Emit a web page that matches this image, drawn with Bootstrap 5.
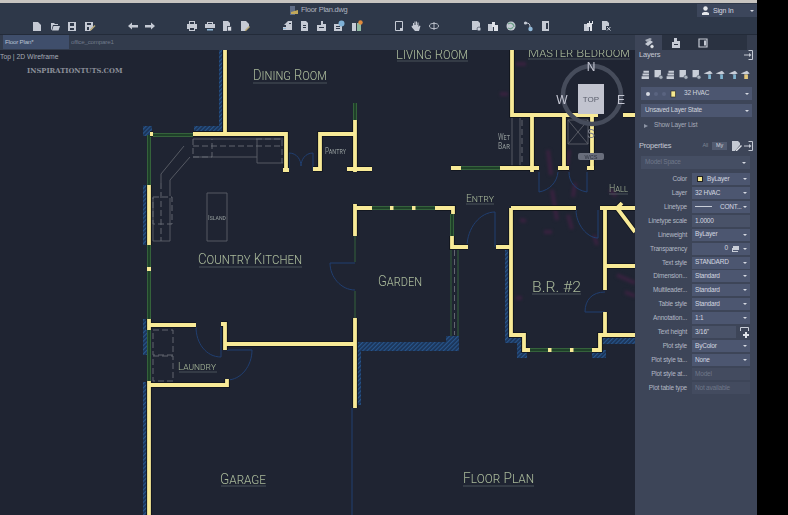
<!DOCTYPE html>
<html lang="en">
<head>
    <meta charset="UTF-8">
    <title>Floor Plan.dwg</title>
    <link href="https://cdn.jsdelivr.net/npm/bootstrap@5.3.0/dist/css/bootstrap.min.css" rel="stylesheet">
    <style>
        html, body { height: 515px; overflow: hidden; background: #000; }
        body { font-family: "Liberation Sans", Arial, sans-serif; font-size: 6.5px; letter-spacing: -.2px; line-height: 1; color: #c9ced8; }
        .app-shell { width: 757px; height: 515px; }
        .sys-strip { height: 3px; background: #c8c5c1; }
        .title-row { height: 14px; background: #2e3849; padding-left: 290px; }
        .title-text { font-size: 7.5px; letter-spacing: -.25px; color: #aeb4c0; margin-left: 2px; }
        .signin { width: 60px; height: 13px; margin-top: 1px; background: #3c465b; font-size: 7px; color: #d4d8e0; padding: 0 3px 0 5px; }
        .tool-row { height: 18px; background: #2e3849; border-bottom: 1px solid #232b39; padding-left: 31px; }
        .tb-ico { width: 12px; height: 12px; flex: none; margin-right: 5.5px; color: #c5cad4; filter: blur(.25px); }
        .grp-a { margin-left: 25.5px; }
        .grp-b { margin-left: 24.5px; }
        .tab-row { height: 15px; background: #323b4c; }
        .doc-tab { width: 66px; height: 14px; margin-left: 3px; background: #3f4e6b; color: #b9c2d2; font-size: 6.2px; padding: 0 2px; }
        .doc-tab2 { width: 66px; color: #707a8b; font-size: 6.2px; padding-left: 2px; }
        .pal-tabs { width: 122px; margin-left: auto; height: 15px; background: #2a3241; }
        .pal-tab { width: 27px; height: 15px; justify-content: center; }
        .pal-tab-on { background: #3d4558; }
        .pal-end { width: 10px; height: 15px; margin-left: auto; background: #353d4e; }
        .work-area { height: 465px; }
        .plan-wrap { width: 635px; height: 465px; background: #1f2432; }
        .plan-svg { display: block; filter: blur(.35px); }
        .view-label { left: 0; top: 4px; font-size: 6.8px; letter-spacing: 0; color: #a5abb6; }
        .watermark { left: 27px; top: 18px; font-family: "DejaVu Serif", serif; font-weight: 700; font-size: 6.8px; letter-spacing: 0; color: #8b8f99; }
        .palette { width: 122px; height: 465px; background: #3d4558; padding: 0 5px 0 6px; }
        .pal-head { height: 10px; font-size: 7.5px; color: #c3c8d3; margin-left: -2px; margin-right: -3px; }
        .layer-tools { height: 14px; margin-top: 7px; margin-left: -1px; }
        .layer-tools svg { width: 12.4px; height: 11px; color: #c9ced8; flex: none; filter: blur(.25px); }
        .combo { height: 13px; background: #4c5670; color: #d0d4dd; padding: 0 3px 0 4px; margin-bottom: 4px; }
        .combo-first { margin-top: 6px; }
        .caret-d { width: 0; height: 0; border: 2px solid transparent; border-top: 2.5px solid #d5d9e2; border-bottom: 0; margin-left: auto; flex: none; }
        .show-list { height: 13px; color: #a5abb8; padding-left: 3px; gap: 6px; margin-top: -2px; margin-bottom: 9px; }
        .tri-r { width: 0; height: 0; border: 2.5px solid transparent; border-left: 4px solid #8d94a4; border-right: 0; }
        .seg-box { font-size: 5.5px; padding: 1.5px 4px; color: #7c8494; }
        .seg-on { background: #525b70; color: #d3d7df; }
        .model-row { height: 13px; background: #454e63; color: #6f7789; margin: 5px 2px 4px 0; padding: 0 4px; }
        .prop-grid { display: grid; grid-template-columns: 50px 58px; column-gap: 5px; row-gap: 1.93px; margin-left: -4px; }
        .prop-name { height: 12px; text-align: right; color: #b3b9c5; white-space: nowrap; padding-top: 3px; }
        .prop-val { height: 12px; background: #4c5670; color: #d4d8e0; padding: 0 3px; white-space: nowrap; }
        .prop-flat { background: #495268; }
        .prop-off { background: #434b5f; color: #6f7789; }
        .side-black { flex: 1; background: #000; }
        .rm { font-family: Roboto, "Liberation Sans", sans-serif; font-weight: 300; font-variant: small-caps; letter-spacing: 0; fill: #a9b99a; font-size: 15px; }
        .rm-lg { font-size: 13.5px; }
        .rm-md { font-size: 11px; }
        .rm-sm { font-family: Roboto, "Liberation Sans", sans-serif; font-variant: small-caps; letter-spacing: 0; fill: #8d9596; font-size: 9px; }
        .rm-xs { font-size: 7px; }
        .ul { stroke: #565f64; stroke-width: .8; fill: none; }
        .wall { stroke: #f8ea97; stroke-width: 3.8; fill: none; }
        .wall-sh { stroke: #10131b; stroke-width: 5.6; fill: none; }
        .glass { stroke: #35623b; stroke-width: 4; fill: none; }
        .glass-in { stroke: #1e4029; stroke-width: 2; fill: none; }
        .thin-g { stroke: #35623b; stroke-width: 1; fill: none; }
        .door { stroke: #213f70; stroke-width: 1; fill: none; }
        .fix { stroke: #5c6069; stroke-width: .9; fill: none; }
        .fix-d { stroke: #696d76; stroke-width: .9; fill: none; stroke-dasharray: 6 3; }
        .ghost { stroke: #38223f; stroke-width: 4; fill: none; filter: blur(1.4px); }
        .cmp { font-family: "Liberation Sans", sans-serif; letter-spacing: 0; fill: #c5c7d3; font-size: 12px; }
        .cmp-dim { fill: #7c7f8b; }
        .cube-txt { font-family: "Liberation Sans", sans-serif; letter-spacing: 0; font-size: 8px; fill: #5a5e6c; }
        .wcs-txt { font-family: "Liberation Sans", sans-serif; letter-spacing: 0; font-size: 5.5px; fill: #2e3340; }
    </style>
</head>
<body>
    <!-- icon sprite -->
    <svg class="d-none" xmlns="http://www.w3.org/2000/svg">
        <symbol id="i-doc" viewBox="0 0 12 12"><path fill="currentColor" d="M2 2h5l3 3v6H2z"/></symbol>
        <symbol id="i-open" viewBox="0 0 12 12"><path fill="currentColor" d="M2 3h3l1 1h3v1H4L2.500 10H2zM4.500 6H11L9.500 10.500H3z"/></symbol>
        <symbol id="i-save" viewBox="0 0 12 12"><path fill="currentColor" fill-rule="evenodd" d="M2 2h8v9H2zM4 3v3h4V3zM4 8v2h4V8z"/></symbol>
        <symbol id="i-saveas" viewBox="0 0 12 12"><path fill="currentColor" fill-rule="evenodd" d="M1 2h8v6L6 11H1zM3 3v2h4V3zM3 7v3h2V7z"/><path fill="#b9a978" d="M10.500 5l1 1L7 10.500H6V9.500z"/></symbol>
        <symbol id="i-undo" viewBox="0 0 12 12"><path fill="currentColor" d="M1 6l4-3.500V5h6v2.500H5V9.500z"/></symbol>
        <symbol id="i-redo" viewBox="0 0 12 12"><path fill="currentColor" d="M11 6L7 2.500V5H1v2.500h6v2z"/></symbol>
        <symbol id="i-print" viewBox="0 0 12 12"><path fill="currentColor" fill-rule="evenodd" d="M3 1h6v3h2v5H9v2H3V9H1V4h2zM4 2v2h4V2zM4 8v2h4V8z"/></symbol>
        <symbol id="i-print2" viewBox="0 0 12 12"><path fill="currentColor" fill-rule="evenodd" d="M3 2h6v2h2v4H1V4h2zM4 3v1h4V3z"/><path fill="#8fb8d8" d="M3 9h6v1.500H3z"/></symbol>
        <symbol id="i-sheet" viewBox="0 0 12 12"><path fill="currentColor" d="M2 1h5l2 2v3H6v5H2z"/><path fill="#d8dbe2" stroke="#2e3849" stroke-width=".6" d="M6.500 6.500h4v4.500h-4z"/></symbol>
        <symbol id="i-sheet2" viewBox="0 0 12 12"><path fill="currentColor" d="M2 1h5l3 3v3L6 11H2z"/><path fill="#b9a978" d="M10 6l1 1-4 4H6v-1z"/></symbol>
        <symbol id="i-sets" viewBox="0 0 12 12"><path fill="currentColor" d="M7 1h4v9H2V7h3V5H3z"/><path fill="#2e3849" d="M8 3h2v1H8z"/><path fill="#8fb8d8" d="M2 8h3v1H2z"/></symbol>
        <symbol id="i-pages" viewBox="0 0 12 12"><path fill="currentColor" d="M3 1h5l2 2v8H3z"/><path fill="#2e3849" d="M5 5h3v1H5zM5 7h3v1H5z"/></symbol>
        <symbol id="i-blocks" viewBox="0 0 12 12"><path fill="currentColor" d="M5 1h2v3h3v7H1V5h4z"/><path fill="#2e3849" d="M3 7h5v1H3z"/></symbol>
        <symbol id="i-globe" viewBox="0 0 12 12"><path fill="currentColor" d="M1 4h8v7H1z"/><circle cx="8.500" cy="3.500" r="3" fill="#7eb0d6"/><path fill="#2e3849" d="M3 6h4v1H3zM3 8h4v1H3z"/></symbol>
        <symbol id="i-book" viewBox="0 0 12 12"><path fill="currentColor" d="M1 3h4v8H1z"/><path fill="#8fb8a0" d="M6 3h4v8H6z"/><circle cx="9.500" cy="2.500" r="2.200" fill="#e08a3c"/></symbol>
        <symbol id="i-frame" viewBox="0 0 12 12"><path fill="none" stroke="currentColor" d="M2.500 1.500h7v9h-7z"/><path fill="currentColor" d="M7 8h3v2.500H7z"/></symbol>
        <symbol id="i-hand" viewBox="0 0 12 12"><path fill="currentColor" d="M3 6V3h1v2h.5V1.500h1V5H6V1.500h1V5h.5V2.500h1V7l1-1.500 1 .5L9 11H5L2 7.500 1.500 6l1-.5z"/></symbol>
        <symbol id="i-orbit" viewBox="0 0 12 12"><ellipse cx="6" cy="6" rx="4.500" ry="2.600" fill="none" stroke="currentColor" stroke-width=".9"/><path stroke="currentColor" stroke-width=".9" d="M6 2v8"/></symbol>
        <symbol id="i-view" viewBox="0 0 12 12"><path fill="currentColor" d="M2 1h6l2 2v7H2z"/><circle cx="9" cy="9" r="2" fill="#c9ced8" stroke="#2e3849" stroke-width=".6"/></symbol>
        <symbol id="i-clip" viewBox="0 0 12 12"><path fill="currentColor" d="M1 4h5v7H1z"/><path fill="#dfe2e8" d="M5 2h3v3h3v6H7V7H5z"/></symbol>
        <symbol id="i-swirl" viewBox="0 0 12 12"><circle cx="6" cy="6" r="4.500" fill="currentColor"/><path fill="none" stroke="#6fa08a" stroke-width="1.300" d="M3 4c3-2 6 0 6 3M3 8c2 1 4 1 5-1"/></symbol>
        <symbol id="i-link" viewBox="0 0 12 12"><circle cx="3.500" cy="3" r="1.600" fill="currentColor"/><circle cx="8.500" cy="9" r="2.200" fill="#8fb8d8"/><path fill="none" stroke="currentColor" d="M4 3c3 0 4 1 4 4"/></symbol>
        <symbol id="i-mirror" viewBox="0 0 12 12"><path fill="currentColor" fill-rule="evenodd" d="M2 1h7v10H2zM6 3v6h2V3z"/></symbol>
        <symbol id="i-grid" viewBox="0 0 12 12"><path fill="currentColor" d="M1 4h5v7H1z"/><path fill="#dfe2e8" d="M4 3h2V1h1v2h2V1h1v3H9v7H7V7H4z"/></symbol>
        <symbol id="i-cross" viewBox="0 0 12 12"><path fill="currentColor" d="M2 1h5l2 2v3H6v4H2z"/><path stroke="#c9ced8" d="M7 7l3.500 3.500M10.500 7L7 10.500"/></symbol>
        <symbol id="i-stack" viewBox="0 0 12 12"><path fill="currentColor" d="M3 2h6v2H3zM2 5h7v2H2zM1 8h8v3H1z"/></symbol>
        <symbol id="i-stack2" viewBox="0 0 12 12"><path fill="currentColor" d="M2 1h7v8H2z"/><circle cx="9" cy="9" r="2.200" fill="#aab2bd" stroke="#3d4558" stroke-width=".6"/></symbol>
        <symbol id="i-wedge" viewBox="0 0 12 12"><path fill="currentColor" d="M1 5l7-3 3 3-4 1z"/><path fill="#7fb3cf" d="M6 6h3v5H6z"/></symbol>
        <symbol id="i-wedge2" viewBox="0 0 12 12"><path fill="currentColor" d="M1 5l7-3 3 3-4 1z"/><path fill="#e3c77a" d="M5 6h4v5H5z"/></symbol>
        <symbol id="i-dock" viewBox="0 0 12 12"><path fill="none" stroke="currentColor" d="M5.500 1.500h4v9h-4"/><path fill="currentColor" d="M1 5.500h5V4l2.500 2L6 8V6.500H1z"/></symbol>
        <symbol id="i-layer" viewBox="0 0 12 12"><path fill="currentColor" d="M2 7l5-4 3 2-5 4z"/><path fill="currentColor" opacity=".8" d="M2 3l5-2 2 1-5 3z"/><circle cx="9" cy="9.500" r="2" fill="#dfe2e8" stroke="#2a3241" stroke-width=".5"/></symbol>
        <symbol id="i-lay2" viewBox="0 0 12 12"><path fill="currentColor" d="M4 1h3v3h3v7H2V5h2z"/><path fill="#2a3241" d="M4 7h4v1H4z"/></symbol>
        <symbol id="i-calc" viewBox="0 0 12 12"><path fill="none" stroke="currentColor" stroke-width="1.200" d="M2 2h8v8H2z"/><path fill="currentColor" d="M7 3.500h2v5H7z"/></symbol>
        <symbol id="i-edit" viewBox="0 0 12 12"><path fill="currentColor" d="M1 1h6l2 2v2L4 11H1z"/><path fill="#dfe2e8" d="M10 5l1 1-5 5H5v-1z"/></symbol>
    </svg>

    <div class="d-flex">
        <div class="app-shell">
            <div class="sys-strip"></div>

            <!-- title bar -->
            <div class="title-row d-flex align-items-center">
                <svg width="9" height="10" viewBox="0 0 9 10"><path fill="#5f6c86" d="M0 1h5v9H0z"/><path fill="#c2a85a" d="M1 7l7-2v4H1z"/></svg>
                <span class="title-text">Floor Plan.dwg</span>
                <div class="signin d-flex align-items-center ms-auto">
                    <svg class="me-1" width="7" height="9" viewBox="0 0 7 9"><circle cx="3.500" cy="2.500" r="2.200" fill="#e4e6ea"/><path fill="#e4e6ea" d="M0 9V7l2-1h3l2 1v2z"/></svg>
                    <span>Sign In</span>
                    <span class="caret-d"></span>
                </div>
            </div>

            <!-- quick access toolbar -->
            <div class="tool-row d-flex align-items-center">
                <svg class="tb-ico"><use href="#i-doc"/></svg>
                <svg class="tb-ico"><use href="#i-open"/></svg>
                <svg class="tb-ico"><use href="#i-save"/></svg>
                <svg class="tb-ico"><use href="#i-saveas"/></svg>
                <svg class="tb-ico grp-a"><use href="#i-undo"/></svg>
                <svg class="tb-ico"><use href="#i-redo"/></svg>
                <svg class="tb-ico grp-b"><use href="#i-print"/></svg>
                <svg class="tb-ico"><use href="#i-print2"/></svg>
                <svg class="tb-ico"><use href="#i-sheet"/></svg>
                <svg class="tb-ico"><use href="#i-sheet2"/></svg>
                <svg class="tb-ico grp-b"><use href="#i-sets"/></svg>
                <svg class="tb-ico"><use href="#i-pages"/></svg>
                <svg class="tb-ico"><use href="#i-blocks"/></svg>
                <svg class="tb-ico"><use href="#i-globe"/></svg>
                <svg class="tb-ico"><use href="#i-book"/></svg>
                <svg class="tb-ico grp-b"><use href="#i-frame"/></svg>
                <svg class="tb-ico"><use href="#i-hand"/></svg>
                <svg class="tb-ico"><use href="#i-orbit"/></svg>
                <svg class="tb-ico grp-b"><use href="#i-view"/></svg>
                <svg class="tb-ico"><use href="#i-clip"/></svg>
                <svg class="tb-ico"><use href="#i-swirl"/></svg>
                <svg class="tb-ico"><use href="#i-link"/></svg>
                <svg class="tb-ico"><use href="#i-mirror"/></svg>
                <svg class="tb-ico grp-a"><use href="#i-grid"/></svg>
                <svg class="tb-ico"><use href="#i-cross"/></svg>
            </div>

            <!-- file tabs and palette tabs -->
            <div class="tab-row d-flex">
                <div class="doc-tab d-flex align-items-center">Floor Plan*</div>
                <div class="doc-tab2 d-flex align-items-center">office_compare1</div>
                <div class="pal-tabs d-flex align-items-center">
                    <div class="pal-tab pal-tab-on d-flex align-items-center"><svg class="tb-ico m-0"><use href="#i-layer"/></svg></div>
                    <div class="pal-tab d-flex align-items-center"><svg class="tb-ico m-0"><use href="#i-lay2"/></svg></div>
                    <div class="pal-tab d-flex align-items-center"><svg class="tb-ico m-0"><use href="#i-calc"/></svg></div>
                    <div class="pal-end"></div>
                </div>
            </div>

            <div class="work-area d-flex">
                <!-- drawing area -->
                <div class="plan-wrap position-relative overflow-hidden">
                    <svg class="plan-svg" width="635" height="465" viewBox="0 50 635 465" xmlns="http://www.w3.org/2000/svg">
                        <defs>
                            <pattern id="hatch" width="3" height="3" patternUnits="userSpaceOnUse" patternTransform="rotate(45)">
                                <rect width="3" height="3" fill="#1b3356"/>
                                <rect width="1.200" height="3" fill="#28568c"/>
                            </pattern>
                            <path id="walls" d="M225 50V134M193 134H286V170M283 170H289
                                M313 169H320V134H356M355 120V172M347 169H372
                                M355 204V236M355 208H372M435 208H453V214M452 236V247H468
                                M451 168H461M500 168H539M532 115V172M558 168H569M564 115V168M587 168H594M592 115V170
                                M512 50V115H598M623 115H635
                                M496 247H511M511 208V335H524V350H530M511 208H576M592 350H600V335H635M605 208V290M605 312V335M600 208H635M617 208L635 232M605 266H635M622 203L617 208
                                M149 185V245M149 319V330M149 381V515M149 325H196M149 385H227V379M221 324H225V350M225 344H355M355 318V408M150 134H153"/>
                        </defs>

                        <!-- ghosted furniture layer -->
                        <path class="ghost" d="M516 64h10M500 94h8M548 150l3 25M552 190l5 30M569 150l-3 20M575 183l-2 14M544 232h8M568 215l4 14M522 298h-6M594 235l3 10M610 190l6 6M617 275l18 8M625 292l10 4M520 220l6 1"/>

                        <!-- hatched exterior -->
                        <g fill="url(#hatch)">
                            <rect x="143" y="126" width="9" height="10"/>
                            <rect x="194" y="126" width="29" height="5"/>
                            <rect x="219" y="50" width="4" height="78"/>
                            <rect x="143" y="185" width="4" height="60"/>
                            <rect x="143" y="319" width="4" height="36"/>
                            <rect x="143" y="382" width="4" height="133"/>
                            <rect x="357" y="342" width="90" height="9"/>
                            <rect x="446" y="336" width="13" height="15"/>
                            <rect x="357" y="345" width="4" height="60"/>
                            <rect x="505" y="250" width="4" height="90"/>
                            <rect x="505" y="338" width="17" height="5"/>
                            <rect x="517" y="342" width="10" height="16"/>
                            <rect x="592" y="350" width="14" height="8"/>
                            <rect x="602" y="338" width="33" height="6"/>
                        </g>

                        <!-- fixtures -->
                        <path class="fix" d="M193 139H284M193 157H257M190 157L170 180V196M184 146L161 174V183M170 198V241H153M153 198V241
                            M257 139V163H284V139M512 118V168M520 118V168M568 120H588V144H568zM568 120L588 144M588 120L568 144"/>
                        <path class="fix-d" d="M193 146H283M193 139V157H212V139M161 183V241M256 139H282V163M153 197H172V224H153z"/>
                        <path class="fix" d="M207 193H227V241H207z"/>
                        <path class="fix-d" d="M522 120V168M153 330H173V355H153zM153 356H173V381H153z"/>
                        <path class="fix-d" d="M454.500 250V335"/>

                        <!-- doors -->
                        <path class="door" d="M289 153V170M289 153C297 153 301 160 301 166C301 160 305 153 313 153V170
                            M330 263H355M330 263C330 277 341 290 355 290M495 212V247M495 212C480 212 467 228 467 247
                            M196 327C196 343 206 357 221 357V327M227 350H252C252 366 241 380 227 380
                            M352 408V515M539 172V192C550 190 557 182 558 172M587 172V192C575 190 569 182 569 172
                            M576 210C576 224 587 238 598 238V210M605 292C592 292 585 300 585 312H605"/>

                        <!-- walls -->
                        <path class="glass" d="M150 135H193M149 135V185M149 245V319M149 330V381
                            M355 103V120M372 208H435M452 214V236M461 168H500M530 350H592"/>
                        <path class="glass-in" d="M150 135H193M149 135V185M149 245V319M149 330V381
                            M355 103V120M372 208H435M452 214V236M461 168H500M530 350H592"/>
                        <path class="thin-g" d="M355 236V262M355 291V318M451 250V336M458 250V336"/>
                        <use href="#walls" class="wall-sh"/>
                        <use href="#walls" class="wall"/>
                        <g fill="#f8ea97">
                            <rect x="147" y="267" width="4" height="4"/>
                            <rect x="390" y="206" width="3.500" height="4"/>
                            <rect x="412" y="206" width="3.500" height="4"/>
                            <rect x="548" y="348" width="3.500" height="4"/>
                            <rect x="570" y="348" width="3.500" height="4"/>
                        </g>

                        <!-- room names -->
                        <text class="rm" x="253" y="80" textLength="74" lengthAdjust="spacingAndGlyphs">Dining Room</text>
                        <path class="ul" d="M253 83H327"/>
                        <text class="rm" x="396" y="59" textLength="72" lengthAdjust="spacingAndGlyphs">Living Room</text>
                        <path class="ul" d="M397 61H468"/>
                        <text class="rm rm-lg" x="528" y="57" textLength="102" lengthAdjust="spacingAndGlyphs">Master Bedroom</text>
                        <path class="ul" d="M528 59H630"/>
                        <text class="rm" x="198" y="264" textLength="104" lengthAdjust="spacingAndGlyphs">Country Kitchen</text>
                        <path class="ul" d="M199 267H302"/>
                        <text class="rm" x="378" y="286" textLength="44" lengthAdjust="spacingAndGlyphs">Garden</text>
                        <text class="rm" x="532" y="292" textLength="49" lengthAdjust="spacingAndGlyphs">B.R. #2</text>
                        <path class="ul" d="M532 294H581"/>
                        <text class="rm" x="220" y="484" textLength="46" lengthAdjust="spacingAndGlyphs">Garage</text>
                        <path class="ul" d="M221 486H266"/>
                        <text class="rm" x="463" y="483" textLength="71" lengthAdjust="spacingAndGlyphs">Floor Plan</text>
                        <path class="ul" d="M463 486H534"/>
                        <text class="rm rm-md" x="466" y="202" textLength="28" lengthAdjust="spacingAndGlyphs">Entry</text>
                        <path class="ul" d="M466 204H494"/>
                        <text class="rm rm-md" x="609" y="192" textLength="19" lengthAdjust="spacingAndGlyphs">Hall</text>
                        <path class="ul" d="M609 194H628"/>
                        <text class="rm rm-md" x="178" y="370" textLength="38" lengthAdjust="spacingAndGlyphs">Laundry</text>
                        <path class="ul" d="M179 372H217"/>
                        <text class="rm-sm" x="325" y="154" textLength="21" lengthAdjust="spacingAndGlyphs">Pantry</text>
                        <text class="rm-sm rm-xs" x="208" y="220" textLength="18" lengthAdjust="spacingAndGlyphs">Island</text>
                        <text class="rm-sm" x="498" y="140" textLength="12" lengthAdjust="spacingAndGlyphs">Wet</text>
                        <text class="rm-sm" x="498" y="149" textLength="12" lengthAdjust="spacingAndGlyphs">Bar</text>

                        <!-- view cube -->
                        <circle cx="592" cy="95" r="29" fill="none" stroke="#464c5b" stroke-width="4.500"/>
                        <rect x="578" y="84" width="26" height="30" fill="#c2c4cf"/>
                        <text class="cube-txt" x="591" y="102" text-anchor="middle">TOP</text>
                        <text class="cmp" x="591" y="71" text-anchor="middle">N</text>
                        <text class="cmp" x="562" y="104" text-anchor="middle">W</text>
                        <text class="cmp" x="621" y="104" text-anchor="middle">E</text>
                        <text class="cmp cmp-dim" x="591" y="138" text-anchor="middle">S</text>
                        <rect x="578" y="153" width="26" height="7" rx="2" fill="#696e7c"/>
                        <text class="wcs-txt" x="591" y="159" text-anchor="middle">WCS</text>
                    </svg>
                    <div class="view-label position-absolute">Top | 2D Wireframe</div>
                    <div class="watermark position-absolute">INSPIRATIONTUTS.COM</div>
                </div>

                <!-- right palette -->
                <aside class="palette">
                    <div class="pal-head d-flex align-items-center justify-content-between">
                        <span>Layers</span>
                        <svg class="tb-ico m-0"><use href="#i-dock"/></svg>
                    </div>
                    <div class="layer-tools d-flex align-items-center">
                        <svg><use href="#i-stack"/></svg><svg><use href="#i-stack2"/></svg><svg><use href="#i-stack"/></svg>
                        <svg><use href="#i-stack2"/></svg><svg><use href="#i-stack2"/></svg><svg><use href="#i-wedge"/></svg>
                        <svg><use href="#i-wedge"/></svg><svg><use href="#i-wedge"/></svg><svg><use href="#i-wedge2"/></svg>
                    </div>
                    <div class="combo combo-first d-flex align-items-center">
                        <svg width="31" height="8" viewBox="0 0 31 8"><circle cx="3" cy="4" r="2" fill="#d5d9e2"/><circle cx="11" cy="4" r="2" fill="#5a6480"/><circle cx="19" cy="4" r="2" fill="#5a6480"/><rect x="26" y="1" width="4.500" height="6" fill="#f6e88f" stroke="#222" stroke-width=".6"/></svg>
                        <span class="ms-2">32 HVAC</span><span class="caret-d"></span>
                    </div>
                    <div class="combo d-flex align-items-center">Unsaved Layer State<span class="caret-d"></span></div>
                    <div class="show-list d-flex align-items-center"><span class="tri-r"></span><span>Show Layer List</span></div>
                    <div class="pal-head d-flex align-items-center">
                        <span class="me-auto">Properties</span>
                        <span class="seg-box">All</span>
                        <span class="seg-box seg-on me-1">My</span>
                        <svg class="tb-ico m-0"><use href="#i-edit"/></svg>
                        <svg class="tb-ico m-0"><use href="#i-dock"/></svg>
                    </div>
                    <div class="model-row d-flex align-items-center">Model Space<span class="caret-d"></span></div>
                    <div class="prop-grid">
                        <div class="prop-name">Color</div><div class="prop-val d-flex align-items-center"><svg class="me-1" width="8" height="6"><rect x="2.500" y=".5" width="5" height="5" fill="#f6e88f" stroke="#222"/></svg>ByLayer<span class="caret-d"></span></div>
                        <div class="prop-name">Layer</div><div class="prop-val d-flex align-items-center">32 HVAC<span class="caret-d"></span></div>
                        <div class="prop-name">Linetype</div><div class="prop-val d-flex align-items-center"><svg class="me-2" width="17" height="2"><rect width="17" height="1" fill="#c9ced8"/></svg>CONT...<span class="caret-d"></span></div>
                        <div class="prop-name">Linetype scale</div><div class="prop-val prop-flat d-flex align-items-center">1.0000</div>
                        <div class="prop-name">Lineweight</div><div class="prop-val d-flex align-items-center">ByLayer<span class="caret-d"></span></div>
                        <div class="prop-name">Transparency</div><div class="prop-val d-flex align-items-center"><span class="ms-auto">0</span><svg class="ms-1 me-1" width="7" height="7" viewBox="0 0 7 7"><path fill="#c9ced8" d="M1 1h6v4H1zM0 3h1v3h5v1H0z"/></svg><span class="caret-d ms-0"></span></div>
                        <div class="prop-name">Text style</div><div class="prop-val d-flex align-items-center">STANDARD<span class="caret-d"></span></div>
                        <div class="prop-name">Dimension...</div><div class="prop-val d-flex align-items-center">Standard<span class="caret-d"></span></div>
                        <div class="prop-name">Multileader...</div><div class="prop-val d-flex align-items-center">Standard<span class="caret-d"></span></div>
                        <div class="prop-name">Table style</div><div class="prop-val d-flex align-items-center">Standard<span class="caret-d"></span></div>
                        <div class="prop-name">Annotation...</div><div class="prop-val d-flex align-items-center">1:1<span class="caret-d"></span></div>
                        <div class="prop-name">Text height</div><div class="d-flex"><div class="prop-val prop-flat flex-grow-1 d-flex align-items-center">3/16"</div><svg class="ms-1" width="10" height="12" viewBox="0 0 10 12"><path fill="none" stroke="#c9ced8" d="M.5 5V1.500h8V5"/><path fill="#dfe2e8" d="M5 6h2v2h2v2H7v2H5v-2H3V8h2z"/></svg></div>
                        <div class="prop-name">Plot style</div><div class="prop-val d-flex align-items-center">ByColor<span class="caret-d"></span></div>
                        <div class="prop-name">Plot style ta...</div><div class="prop-val d-flex align-items-center">None<span class="caret-d"></span></div>
                        <div class="prop-name">Plot style at...</div><div class="prop-val prop-off d-flex align-items-center">Model</div>
                        <div class="prop-name">Plot table type</div><div class="prop-val prop-off d-flex align-items-center">Not available</div>
                    </div>
                </aside>
            </div>
        </div>
        <div class="side-black"></div>
    </div>

    <script src="https://cdn.jsdelivr.net/npm/bootstrap@5.3.0/dist/js/bootstrap.bundle.min.js"></script>
</body>
</html>
